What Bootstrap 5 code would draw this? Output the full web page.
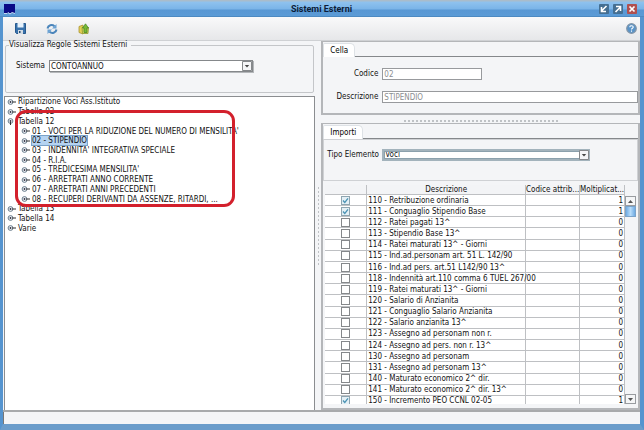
<!DOCTYPE html>
<html lang="it">
<head>
<meta charset="utf-8">
<meta name="viewport" content="width=device-width, initial-scale=1">
<title>Sistemi Esterni</title>
<link href="https://cdn.jsdelivr.net/npm/bootstrap@5.3.0/dist/css/bootstrap.min.css" rel="stylesheet">
<style>
  body { font-family: "DejaVu Sans Condensed", "DejaVu Sans", sans-serif; font-size: 8px; line-height: 10px; color: #111; background: #f4f5f7; }
  .win { border: solid #5594cf; border-width: 0 4px 6px 3px; border-bottom-color: #6b9dcb; }
  .titlebar { height: 17px; margin: 0 -4px 0 -3px; padding: 0 7px 0 4px; background: linear-gradient(#a9bccb 0, #a9bccb 1px, #8fc2ee 2px, #7ab4e8 9px, #5897d3 10px, #5b9bd6 16px, #3f78ad 17px); }
  .titlebar h1 { font: bold 9px/18px Roboto, "Liberation Sans", sans-serif; color: #0c1c38; padding-left: 28px; }
  .win-btn { width: 10px; height: 10px; }
  button { border: 0; padding: 0; background: none; display: block; line-height: 0; }
  svg { display: block; }
  .tools { height: 24px; padding: 0 3px 0 12px; gap: 20px; background: linear-gradient(#f9f9fa, #e6e7e9); border-bottom: 1px solid #cfd1d4; }
  .panes { display: grid; grid-template-columns: minmax(0, 49fr) 6px minmax(0, 50fr); border-bottom: 2px solid #a8aaac; }
  .group { height: 52px; margin: 0 1px 0 2px; padding: 0 60px 0 3px; }
  .group legend { font-size: 8px; line-height: 8px; width: auto; margin: 0; float: none; padding: 0 4px 0 0; }
  fieldset.group { border: 1px solid #c4c6c9; border-radius: 2px; }
  .sistema-row { padding: 11px 0 0 7px; }
  .combo { position: relative; height: 12px; }
  .combo select { appearance: none; width: 100%; height: 100%; border: 1px solid #85888b; border-radius: 0; background: #fff; padding: 0 12px 0 1px; font: inherit; line-height: 9px; color: #111; display: block; box-shadow: 1px 1px 0 #b4b7ba; }
  .combo svg { position: absolute; right: 1px; top: 1px; pointer-events: none; }
  .combo.focus select { border: 2px solid #a3b3bc; outline: 1px solid #8ba0ac; outline-offset: -3px; box-shadow: none; line-height: 8px; }
  .tree-pane { background: #fff; border: 1px solid #8b8d90; border-bottom: 0; position: relative; margin: 3px 0 0 1px; padding: 0 2px; }
  .tree { height: 136px; }
  .tree li { flex: 1 1 0; display: flex; align-items: center; gap: 2px; white-space: nowrap; min-height: 0; line-height: 9px; }
  .tree .kid { padding-left: 14px; }
  .tree .sel { background: #b5d3f1; outline: 1px solid #7ba3c9; }
  .marker { left: 10px; top: 13px; width: 220px; height: 97px; border: 3px solid #d3202c; border-radius: 11px; }
  .dots { background: radial-gradient(circle, #bfc2c5 1px, transparent 1px) 0 0 / 4px 4px; }
  .vdots { width: 2px; height: 80px; }
  .hdots { height: 4px; width: 156px; }
  .tabbox { border: solid #b4b6b9; border-width: 1px 2px 2px 2px; padding-top: 1px; }
  .tabbox .nav-tabs { border: 0; height: 14px; box-shadow: inset 0 -1px #85888b; }
  .tabbox .nav-link { font: inherit; color: #111; line-height: 13px; height: 14px; padding: 0 6px; margin: 0; border: 1px solid #85888b; border-bottom: 0; border-radius: 2px 5px 0 0; background: #f4f5f7; }
  .cella { height: 74px; }
  .cell-form { display: grid; grid-template-columns: 55px minmax(0, 1fr); column-gap: 4px; row-gap: 11px; padding-top: 11px; text-align: right; align-items: center; }
  .cell-form input { height: 12px; border: 1px solid #989a9d; background: #fff; color: #8c8e91; font: inherit; line-height: 10px; padding: 0 1px; border-radius: 0; min-width: 0; }
  .code { width: 100px; }
  .filter { height: 42px; border: 1px solid #cfd1d4; padding: 9px 47px 0 3px; }
  .tipo-label { width: 51px; white-space: nowrap; }
  .grid-wrap { height: 219px; margin: 4px 2px 0; overflow: hidden; }
  .voci { width: 100%; height: 222px; table-layout: fixed; border-collapse: separate; border-spacing: 0; background: #fff; line-height: 9px; }
  .voci th, .voci td { padding: 0 1px; border: solid #bec0c3; border-width: 0 1px 1px 0; white-space: nowrap; vertical-align: middle; }
  .voci th { background: #f3f4f6; font-weight: normal; text-align: center; padding: 0; }
  .voci td:last-child { text-align: right; }
  .tick { position: relative; width: 9px; margin: 0 auto; }
  .tick input { appearance: none; width: 9px; height: 9px; border: 1px solid #85888b; background: #fff; margin: 0; display: block; }
  .tick svg { position: absolute; left: 0; top: 0; display: none; pointer-events: none; }
  .tick input:checked { background: #e4f0f6; border-color: #8fa5b0; }
  .tick input:checked + svg { display: block; }
  .scroll { width: 11px; padding-top: 11px; }
  .scroll button { width: 11px; height: 10px; border: 1px solid #999ca0; background: #f5f6f7; display: flex; align-items: center; justify-content: center; }
  .thumb { height: 11px; background: linear-gradient(90deg, #6fabe3, #b7dcfa 50%, #6fabe3); border: 1px solid #7ba3c9; }
  .status { height: 12px; border-left: 1px solid #777; }
</style>
<script src="https://cdn.jsdelivr.net/npm/bootstrap@5.3.0/dist/js/bootstrap.bundle.min.js"></script>
</head>
<body>
<svg width="0" height="0" class="position-absolute" aria-hidden="true">
  <symbol id="knob" viewBox="0 0 9 8"><circle cx="3.5" cy="4" r="2.4" fill="#eef2f5" stroke="#6b7e8d"/><circle cx="3.5" cy="4" r=".9" fill="#334"/><path d="M5 4h4" stroke="#333"/></symbol>
  <symbol id="open" viewBox="0 0 9 8"><circle cx="3.5" cy="4" r="2.4" fill="#eef2f5" stroke="#6b7e8d"/><circle cx="3.5" cy="4" r=".9" fill="#334"/><path d="M3.5 5v3" stroke="#333"/></symbol>
  <symbol id="drop" viewBox="0 0 10 10"><path d="M.5.5h9v9h-9z" fill="#f4f5f7" stroke="#85888b"/><path d="M2.8 4h4.400L5 6.600z" fill="#444"/></symbol>
  <symbol id="check" viewBox="0 0 9 9"><path d="M2 4.500 3.800 6.500 7 2.300" fill="none" stroke="#4b93b4" stroke-width="1.300"/></symbol>
</svg>
<div class="win d-flex flex-column min-vh-100">
  <header class="titlebar d-flex align-items-center">
    <svg width="12" height="12" viewBox="0 0 12 12"><path d="M0 1h11v9H0z" fill="#0a0a86"/><path d="M0 10.500h3l1-1 2 1.500 2-1.500 3 1" fill="none" stroke="#c4d8f0"/></svg>
    <h1 class="flex-grow-1 text-center m-0">Sistemi Esterni</h1>
    <div class="d-flex gap-1">
      <button type="button" class="win-btn" aria-label="Riduci"><svg width="10" height="10" viewBox="0 0 10 10"><rect width="10" height="10" rx="1" fill="#456f92"/><path d="M7.500 2 3 6.500M2.500 3v4.500H7" fill="none" stroke="#fff" stroke-width="1.600"/></svg></button>
      <button type="button" class="win-btn" aria-label="Ingrandisci"><svg width="10" height="10" viewBox="0 0 10 10"><rect width="10" height="10" rx="1" fill="#456f92"/><path d="M2.500 8 7 3.500M3 2.500h4.500V7" fill="none" stroke="#fff" stroke-width="1.600"/></svg></button>
      <button type="button" class="win-btn" aria-label="Chiudi"><svg width="10" height="10" viewBox="0 0 10 10"><rect width="10" height="10" rx="1" fill="#b0504f"/><path d="m2.500 2.500 5 5m0-5-5 5" stroke="#fff" stroke-width="1.700"/></svg></button>
    </div>
  </header>
  <div class="tools d-flex align-items-center">
    <button type="button" aria-label="Salva"><svg width="11" height="11" viewBox="0 0 11 11"><path d="M.5.5h10v10H1.500l-1-1z" fill="#3972ac" stroke="#27598d"/><path d="M2.500 0h6v4.500h-6z" fill="#e6f1fb"/><path d="M3 7h5v4H3z" fill="#d2dbe3"/><path d="M4 8h1.500v2H4z" fill="#244b73"/></svg></button>
    <button type="button" aria-label="Aggiorna"><svg width="12" height="12" viewBox="0 0 12 12"><path d="M1.500 5.500C2 2 6 1 8.500 3.200M10.500 6.500C10 10 6 11 3.500 8.800" fill="none" stroke="#4b85bb" stroke-width="2"/><path d="M10.500 1v4.500H6zM1.500 11V6.500H6z" fill="#6ba2d3"/></svg></button>
    <button type="button" aria-label="Apri"><svg width="12" height="12" viewBox="0 0 12 12"><path d="M1 3.500 5 2v9l-4-1.500z" fill="#e5cf54" stroke="#a89331" stroke-width=".8"/><path d="M4 4.500h6.500l-.5 6H4.500z" fill="#ddd661" stroke="#8d9a30" stroke-width=".8"/><path d="M6 9.500V5H4.500L7.500.800 10.500 5H9v4.500z" fill="#78b936" stroke="#438124" stroke-width=".7"/></svg></button>
    <button type="button" class="ms-auto" aria-label="Aiuto"><svg width="11" height="11" viewBox="0 0 11 11"><circle cx="5.500" cy="5.500" r="4.800" fill="#5a94c8" stroke="#8496a8" stroke-width="1.200"/><path d="M3.800 4.300c0-2.300 3.600-2 3.400 0-.1 1-1.700 1-1.700 2.200M5.500 7.500v1.200" fill="none" stroke="#fff" stroke-width="1.100"/></svg></button>
  </div>

  <main class="panes flex-grow-1">
    <section class="d-flex flex-column">
      <fieldset class="group">
        <legend>Visualizza Regole Sistemi Esterni</legend>
        <div class="sistema-row d-flex align-items-center gap-1">
          <label for="sistema">Sistema</label>
          <div class="combo flex-grow-1"><select id="sistema"><option>CONTOANNUO</option></select><svg width="10" height="10"><use href="#drop"/></svg></div>
        </div>
      </fieldset>
      <div class="tree-pane flex-grow-1">
        <ul class="tree list-unstyled m-0 d-flex flex-column" id="tree"></ul>
        <div class="marker position-absolute"></div>
      </div>
    </section>
    <div class="d-flex align-items-center justify-content-center"><div class="dots vdots"></div></div>
    <section class="d-flex flex-column">
      <div class="tabbox cella">
        <div class="nav nav-tabs" role="tablist"><button type="button" class="nav-link active" role="tab">Cella</button></div>
        <div class="cell-form">
          <label for="codice">Codice</label><input id="codice" class="code" value="02" readonly>
          <label for="descr">Descrizione</label><input id="descr" value="STIPENDIO" readonly>
        </div>
      </div>
      <div class="d-flex justify-content-center pt-1"><div class="dots hdots"></div></div>
      <div class="tabbox flex-grow-1">
        <div class="nav nav-tabs" role="tablist"><button type="button" class="nav-link active" role="tab">Importi</button></div>
        <div class="filter">
          <div class="d-flex align-items-center gap-1">
            <label for="tipo" class="tipo-label">Tipo Elemento</label>
            <div class="combo focus flex-grow-1"><select id="tipo"><option>Voci</option></select><svg width="10" height="10"><use href="#drop"/></svg></div>
          </div>
        </div>
        <div class="grid-wrap d-flex">
          <div class="flex-grow-1">
            <table class="voci">
              <colgroup><col style="width:14%"><col style="width:53%"><col style="width:18%"><col style="width:15%"></colgroup>
              <thead><tr><th aria-label="Selezione"></th><th>Descrizione</th><th>Codice attrib...</th><th>Moltiplicat...</th></tr></thead>
              <tbody id="rows"></tbody>
            </table>
          </div>
          <div class="scroll d-flex flex-column">
            <button type="button" aria-label="Su"><svg width="5" height="3" viewBox="0 0 5 3"><path d="M0 3 2.500 0 5 3z" fill="#555"/></svg></button>
            <div class="thumb"></div>
            <button type="button" class="mt-auto" aria-label="Giù"><svg width="5" height="3" viewBox="0 0 5 3"><path d="M0 0h5L2.500 3z" fill="#555"/></svg></button>
          </div>
        </div>
      </div>
    </section>
  </main>
  <footer class="status"></footer>
</div>
<script>
  const nodes = ["Ripartizione Voci Ass.Istituto", "Tabella 02", "Tabella 12",
    "01 - VOCI PER LA RIDUZIONE DEL NUMERO DI MENSILITA'", "02 - STIPENDIO",
    "03 - INDENNITA' INTEGRATIVA SPECIALE", "04 - R.I.A.", "05 - TREDICESIMA MENSILITA'",
    "06 - ARRETRATI ANNO CORRENTE", "07 - ARRETRATI ANNI PRECEDENTI",
    "08 - RECUPERI DERIVANTI DA ASSENZE, RITARDI, ...", "Tabella 13", "Tabella 14", "Varie"];
  document.getElementById("tree").innerHTML = nodes.map((t, i) =>
    `<li class="${i > 2 && i < 11 ? "kid" : ""}"><svg width="9" height="8"><use href="#${i === 2 ? "open" : "knob"}"/></svg><span class="${i === 4 ? "sel" : ""}">${t}</span></li>`).join("");
  const voci = ["110 - Retribuzione ordinaria", "111 - Conguaglio Stipendio Base", "112 - Ratei pagati 13^",
    "113 - Stipendio Base 13^", "114 - Ratei maturati 13^ - Giorni", "115 - Ind.ad.personam art. 51 L. 142/90",
    "116 - Ind.ad pers. art.51 L142/90 13^", "118 - Indennità art.110 comma 6 TUEL 267/00",
    "119 - Ratei maturati 13^ - Giorni", "120 - Salario di Anzianita", "121 - Conguaglio Salario Anzianita",
    "122 - Salario anzianita 13^", "123 - Assegno ad personam non r.", "124 - Assegno ad pers. non r. 13^",
    "130 - Assegno ad personam", "131 - Assegno ad personam 13^", "140 - Maturato economico 2^ dir.",
    "141 - Maturato economico 2^ dir. 13^", "150 - Incremento PEO CCNL 02-05"];
  document.getElementById("rows").innerHTML = voci.map((t, i) => {
    const on = i < 2 || i === 18;
    return `<tr><td><div class="tick"><input type="checkbox" aria-label="${t}"${on ? " checked" : ""}><svg width="9" height="9"><use href="#check"/></svg></div></td><td>${t}</td><td></td><td>${on ? 1 : 0}</td></tr>`;
  }).join("");
</script>
</body>
</html>
